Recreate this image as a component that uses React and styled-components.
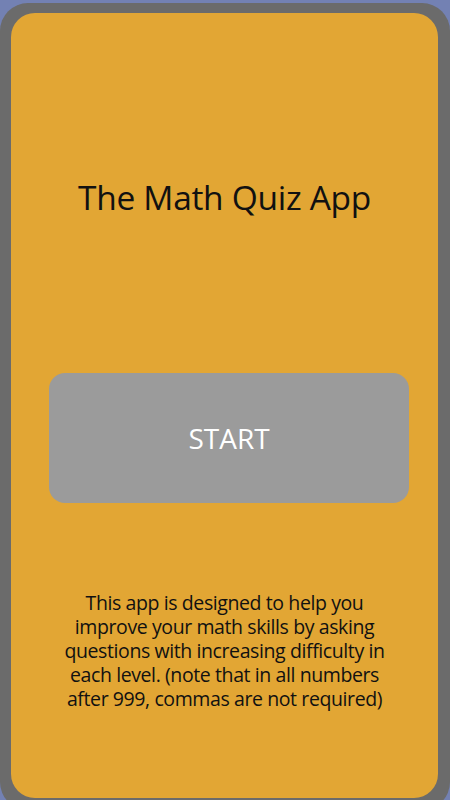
import React from 'react';
import styled, { createGlobalStyle } from 'styled-components';

const GlobalStyle = createGlobalStyle`
  html, body {
    margin: 0;
    padding: 0;
    height: 100%;
    overflow: hidden;
    background: #7381b3;
  }
`

const Phone = styled.div`
  margin-top: 3px;
  height: 807px;
  box-sizing: border-box;
  padding: 10px 12px 12px 11px;
  background: #6b6b6b;
  border-radius: 28px;
`

const Screen = styled.main`
  height: 785px;
  background: #e2a634;
  border-radius: 24px;
  display: flex;
  flex-direction: column;
  align-items: center;
  font-family: "Open Sans", "Noto Sans", sans-serif;
  color: #111;
`

const Title = styled.h1`
  margin: 164px 0 0 0;
  font-size: 33.5px;
  line-height: 40px;
  font-weight: 400;
  letter-spacing: -0.3px;
`

const StartButton = styled.button`
  margin: 156px 0 0 9px;
  width: 360px;
  height: 130px;
  border: none;
  border-radius: 16px;
  background: #9b9b9b;
  color: #fff;
  font-family: inherit;
  font-size: 28px;
  cursor: pointer;
`

const Info = styled.p`
  margin: 88px 0 0 0;
  width: 345px;
  text-align: center;
  font-size: 19.5px;
  line-height: 24px;
  letter-spacing: -0.4px;
`

function App() {
    return (
        <>
            <GlobalStyle />
            <Phone>
                <Screen>
                    <Title>The Math Quiz App</Title>
                    <StartButton>START</StartButton>
                    <Info>
                        This app is designed to help you improve your math skills by asking
                        questions with increasing difficulty in each level. (note that in all
                        numbers after 999, commas are not required)
                    </Info>
                </Screen>
            </Phone>
        </>
    );
}

export default App;
